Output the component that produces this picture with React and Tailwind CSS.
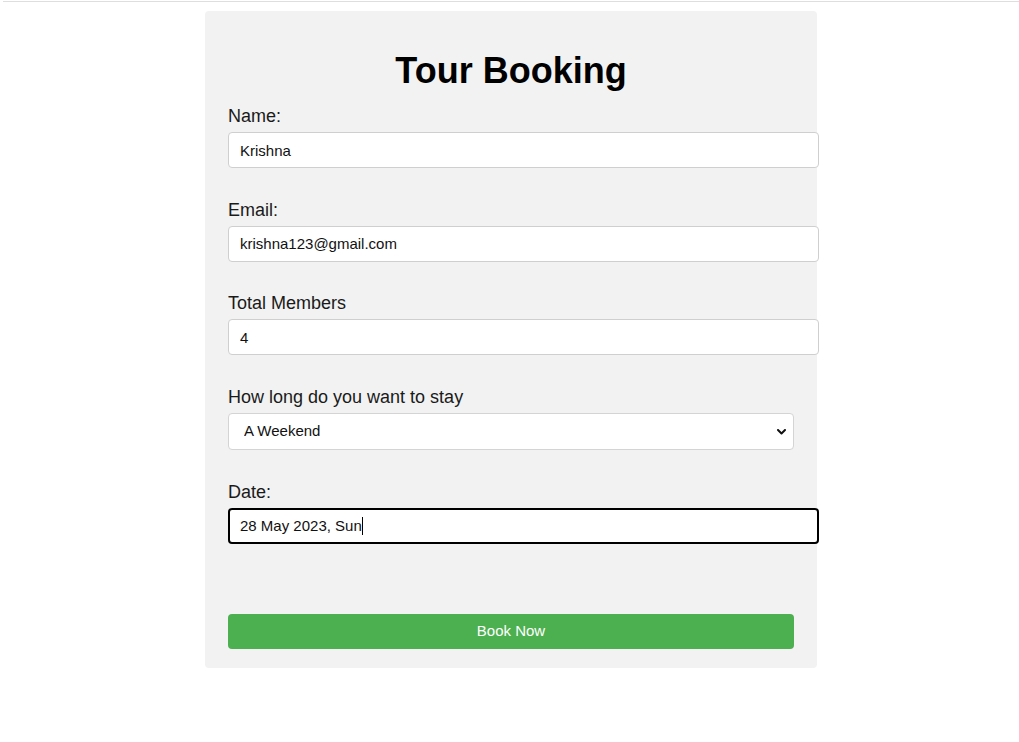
import { useState } from "react";

const fields = [
  { id: "name", label: "Name:", value: "Krishna" },
  { id: "email", label: "Email:", value: "krishna123@gmail.com" },
  { id: "members", label: "Total Members", value: "4" },
];

function Label({ htmlFor, children }) {
  return (
    <label htmlFor={htmlFor} className="block text-[18px] leading-[21px] mb-[5px] text-[#1a1a1a]">
      {children}
    </label>
  );
}

export default function App() {
  const [stay, setStay] = useState("weekend");

  return (
    <div className="min-h-screen bg-white pl-[3px] font-['Liberation_Sans',Arial,sans-serif]">
      {/* thin line at the very top of the page */}
      <div className="h-px mt-px bg-[#dedede]" />

      <form
        className="mx-auto mt-[9px] w-[612px] bg-[#f2f2f2] rounded-[4px] px-[23px] pt-[40px] pb-[19px]"
        onSubmit={(e) => e.preventDefault()}
      >
        <h1 className="text-center text-[36px] leading-[40px] font-bold text-black mb-[15px]">
          Tour Booking
        </h1>

        {fields.map((f) => (
          <div key={f.id} className="mb-[31.5px]">
            <Label htmlFor={f.id}>{f.label}</Label>
            <input
              id={f.id}
              defaultValue={f.value}
              className="box-content block w-full h-[34px] pl-[11px] pr-[12px] py-0 bg-white border border-[#cfcfcf] rounded-[4px] text-[15px] text-[#111] outline-none"
            />
          </div>
        ))}

        <div className="mb-[32.5px]">
          <Label htmlFor="stay">How long do you want to stay</Label>
          <div className="relative">
            <select
              id="stay"
              value={stay}
              onChange={(e) => setStay(e.target.value)}
              className="appearance-none block w-full h-[37px] pl-[15px] pr-8 bg-white border border-[#d4d4d4] rounded-[4px] text-[15px] text-[#111] outline-none"
            >
              <option value="weekend">A Weekend</option>
              <option value="week">A Week</option>
              <option value="month">A Month</option>
            </select>
            <svg
              className="pointer-events-none absolute right-[8px] top-[16px]"
              width="9"
              height="6"
              viewBox="0 0 9 6"
              fill="none"
            >
              <path d="M1 1l3.5 3.5L8 1" stroke="#111" strokeWidth="2" strokeLinecap="round" strokeLinejoin="round" />
            </svg>
          </div>
        </div>

        <div>
          <Label htmlFor="date">Date:</Label>
          {/* focused text field with visible caret */}
          <div
            id="date"
            role="textbox"
            className="box-content flex items-center w-full h-[32px] pl-[10px] pr-[11px] bg-white border-2 border-black rounded-[4px] text-[15px] text-[#111]"
          >
            <span>28 May 2023, Sun</span>
            <span className="inline-block w-px h-[18px] bg-black" />
          </div>
        </div>

        <button
          type="submit"
          className="block w-full h-[35px] mt-[70px] bg-[#4caf50] rounded-[4px] text-white text-[15px]"
        >
          Book Now
        </button>
      </form>
    </div>
  );
}
